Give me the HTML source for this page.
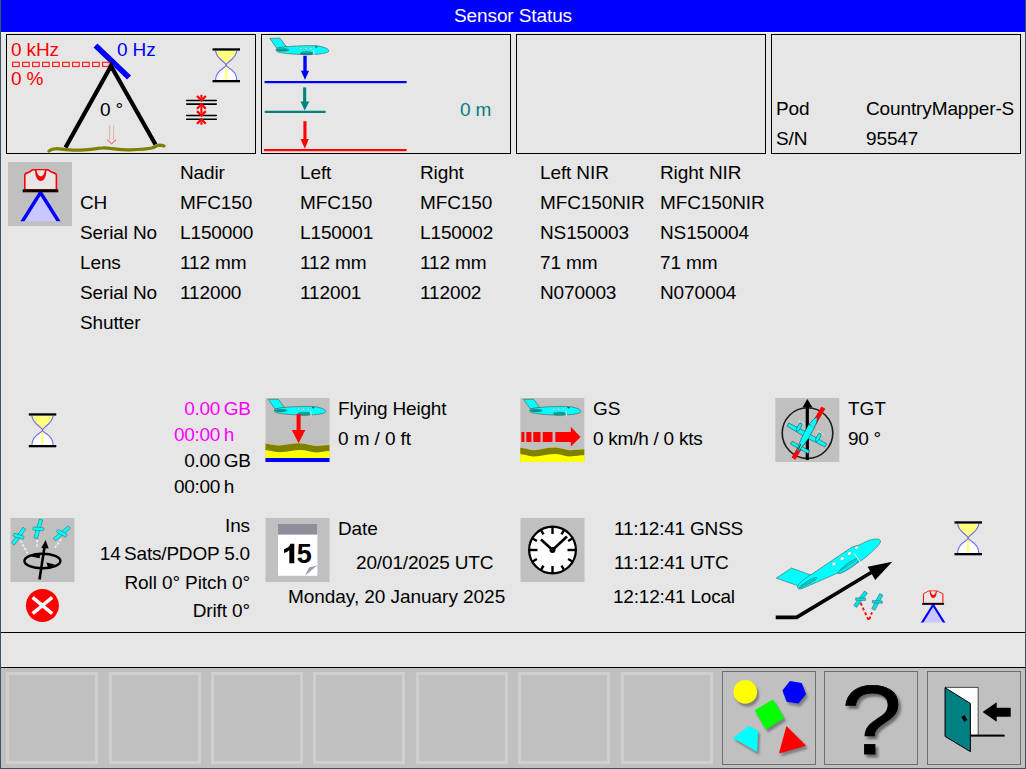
<!DOCTYPE html>
<html><head><meta charset="utf-8">
<style>
html,body{margin:0;padding:0;}
body{width:1026px;height:769px;position:relative;overflow:hidden;background:#e6e6e6;font-family:"Liberation Sans",sans-serif;}
.a{position:absolute;}
.t{position:absolute;font-size:19px;line-height:20px;white-space:pre;color:#000;letter-spacing:-0.12px;}
.r{text-align:right;}
.pnl{position:absolute;top:34px;width:248px;height:118px;border:1px solid #000;}
.btn{position:absolute;top:672px;width:86px;height:86px;border:3px solid #cfcfcf;background:#c0c0c0;}
.ib{position:absolute;top:671px;width:92px;height:92px;border:1px solid #6e6e6e;background:#c0c0c0;}
svg{position:absolute;left:0;top:0;}
</style></head>
<body>
<!-- frame -->
<div class="a" style="left:0;top:0;width:1026px;height:32px;background:#0000ff;"></div>
<div class="a" style="left:1px;top:32px;width:1024px;height:1px;background:#f8f8ee;"></div>
<div class="a" style="left:0;top:0;width:1px;height:769px;background:#3a5266;"></div>
<div class="a" style="left:1025px;top:0;width:1px;height:769px;background:#3a5266;"></div>
<div class="t" style="left:0px;top:5.5px;width:1026px;text-align:center;color:#fff;font-size:19px;letter-spacing:-0.1px;">Sensor Status</div>

<!-- top panels -->
<div class="pnl" style="left:6px;"></div>
<div class="pnl" style="left:261px;"></div>
<div class="pnl" style="left:516px;"></div>
<div class="pnl" style="left:771px;"></div>

<!-- separators / bottom bar -->
<div class="a" style="left:1px;top:632px;width:1024px;height:1px;background:#000;"></div>
<div class="a" style="left:1px;top:667px;width:1024px;height:1px;background:#000;"></div>
<div class="a" style="left:1px;top:668px;width:1024px;height:100px;background:#c0c0c0;"></div>
<div class="a" style="left:0;top:768px;width:1026px;height:1px;background:#3a5266;"></div>

<div class="btn" style="left:6px;"></div>
<div class="btn" style="left:109px;"></div>
<div class="btn" style="left:211px;"></div>
<div class="btn" style="left:313px;"></div>
<div class="btn" style="left:416px;"></div>
<div class="btn" style="left:518px;"></div>
<div class="btn" style="left:621px;"></div>
<div class="ib" style="left:722px;"></div>
<div class="ib" style="left:824px;"></div>
<div class="ib" style="left:927px;"></div>

<!-- panel 1 text -->
<div class="t" style="left:11px;top:40px;color:#ff0000;">0 kHz</div>
<div class="t" style="left:117px;top:40px;color:#0000ff;">0 Hz</div>
<div class="t" style="left:11px;top:69px;color:#ff0000;">0 %</div>
<div class="t" style="left:100px;top:100px;">0 °</div>
<!-- panel 2 text -->
<div class="t" style="left:460px;top:100px;color:#008080;">0 m</div>
<!-- panel 4 text -->
<div class="t" style="left:776px;top:99px;">Pod</div>
<div class="t" style="left:866px;top:99px;">CountryMapper-S</div>
<div class="t" style="left:776px;top:129px;">S/N</div>
<div class="t" style="left:866px;top:129px;">95547</div>

<!-- camera table -->
<div class="t" style="left:180px;top:163px;">Nadir</div>
<div class="t" style="left:300px;top:163px;">Left</div>
<div class="t" style="left:420px;top:163px;">Right</div>
<div class="t" style="left:540px;top:163px;">Left NIR</div>
<div class="t" style="left:660px;top:163px;">Right NIR</div>

<div class="t" style="left:80px;top:193px;">CH</div>
<div class="t" style="left:180px;top:193px;">MFC150</div>
<div class="t" style="left:300px;top:193px;">MFC150</div>
<div class="t" style="left:420px;top:193px;">MFC150</div>
<div class="t" style="left:540px;top:193px;">MFC150NIR</div>
<div class="t" style="left:660px;top:193px;">MFC150NIR</div>

<div class="t" style="left:80px;top:223px;">Serial No</div>
<div class="t" style="left:180px;top:223px;">L150000</div>
<div class="t" style="left:300px;top:223px;">L150001</div>
<div class="t" style="left:420px;top:223px;">L150002</div>
<div class="t" style="left:540px;top:223px;">NS150003</div>
<div class="t" style="left:660px;top:223px;">NS150004</div>

<div class="t" style="left:80px;top:253px;">Lens</div>
<div class="t" style="left:180px;top:253px;">112 mm</div>
<div class="t" style="left:300px;top:253px;">112 mm</div>
<div class="t" style="left:420px;top:253px;">112 mm</div>
<div class="t" style="left:540px;top:253px;">71 mm</div>
<div class="t" style="left:660px;top:253px;">71 mm</div>

<div class="t" style="left:80px;top:283px;">Serial No</div>
<div class="t" style="left:180px;top:283px;">112000</div>
<div class="t" style="left:300px;top:283px;">112001</div>
<div class="t" style="left:420px;top:283px;">112002</div>
<div class="t" style="left:540px;top:283px;">N070003</div>
<div class="t" style="left:660px;top:283px;">N070004</div>

<div class="t" style="left:80px;top:313px;">Shutter</div>

<!-- storage -->
<div class="t r" style="left:150px;top:399px;width:70px;color:#ff00ff;letter-spacing:-0.3px;">0.00</div>
<div class="t" style="left:223.7px;top:399px;color:#ff00ff;">GB</div>
<div class="t r" style="left:150px;top:424.5px;width:70px;color:#ff00ff;letter-spacing:-0.3px;">00:00</div>
<div class="t" style="left:223.7px;top:424.5px;color:#ff00ff;">h</div>
<div class="t r" style="left:150px;top:451px;width:70px;letter-spacing:-0.3px;">0.00</div>
<div class="t" style="left:223.7px;top:451px;">GB</div>
<div class="t r" style="left:150px;top:477px;width:70px;letter-spacing:-0.3px;">00:00</div>
<div class="t" style="left:223.7px;top:477px;">h</div>

<!-- flying height / GS / TGT -->
<div class="t" style="left:338px;top:399px;letter-spacing:-0.2px;">Flying Height</div>
<div class="t" style="left:338px;top:428.5px;letter-spacing:-0.1px;">0 m / 0 ft</div>
<div class="t" style="left:593px;top:399px;">GS</div>
<div class="t" style="left:593px;top:428.5px;letter-spacing:-0.25px;">0 km/h / 0 kts</div>
<div class="t" style="left:848px;top:399px;">TGT</div>
<div class="t" style="left:848px;top:428.5px;letter-spacing:-0.3px;">90 °</div>

<!-- INS -->
<div class="t r" style="left:50px;top:516px;width:200px;">Ins</div>
<div class="t r" style="left:50px;top:544px;width:200px;letter-spacing:-0.2px;">14<span style="margin-left:-1.5px"> </span>Sats/PDOP 5.0</div>
<div class="t r" style="left:50px;top:573px;width:200px;letter-spacing:-0.1px;">Roll 0° Pitch 0°</div>
<div class="t r" style="left:50px;top:601px;width:200px;">Drift 0°</div>

<!-- date -->
<div class="t" style="left:338px;top:519px;">Date</div>
<div class="t" style="left:356px;top:552.5px;letter-spacing:-0.15px;">20/01/2025 UTC</div>
<div class="t" style="left:288px;top:587px;letter-spacing:-0.05px;">Monday, 20 January 2025</div>

<!-- time -->
<div class="t" style="left:614px;top:519px;letter-spacing:-0.2px;">11:12:41 GNSS</div>
<div class="t" style="left:614px;top:553px;letter-spacing:-0.2px;">11:12:41 UTC</div>
<div class="t" style="left:613px;top:587px;letter-spacing:-0.2px;">12:12:41 Local</div>

<!-- ICONS -->
<svg width="1026" height="769" viewBox="0 0 1026 769">
<defs>
 <g id="hg">
  <path d="M3.6,2.8 C3.8,8 8,11 11.5,13.9 C13,15.2 14,16 14.2,17 C14.4,16 15.4,15.2 16.9,13.9 C20.5,11 24.6,8 24.8,2.8 Z" fill="#ffff80"/>
  <path d="M14.2,17.2 C14,18.2 13,19 11,20.3 C7.5,22.5 3.6,25.5 3.6,32 L24.8,32 C24.8,25.5 21,22.5 17.4,20.3 C15.4,19 14.4,18.2 14.2,17.2 Z" fill="#ffffff"/>
  <rect x="12.9" y="16.5" width="2.5" height="15.5" fill="#ffff80"/>
  <path d="M3.6,2.8 C3.8,8 8,11 11.5,13.9 C13,15.2 14,16 14.2,17 C14.4,16 15.4,15.2 16.9,13.9 C20.5,11 24.6,8 24.8,2.8 M14.2,17.2 C14,18.2 13,19 11,20.3 C7.5,22.5 3.6,25.5 3.6,32 M24.8,32 C24.8,25.5 21,22.5 17.4,20.3 C15.4,19 14.4,18.2 14.2,17.2" fill="none" stroke="#6a6af2" stroke-width="1.15"/>
  <rect x="0.5" y="0.3" width="27.5" height="2.3" fill="#000"/>
  <rect x="0.5" y="32" width="27.5" height="2.3" fill="#000"/>
 </g>
 <g id="plane">
  <path d="M0.8,1.4 L11.1,1.2 L17.6,10 L7.7,11.3 Z" fill="#00ffff" stroke="#503030" stroke-width="0.5"/>
  <path d="M7.3,12 C9,9.8 25,8.8 44,8.6 C52,8.6 59.9,11.5 59.9,13.8 C59.9,16.2 50,17.4 40,17.6 C25,17.6 9,16.2 7.3,14 Z" fill="#00ffff" stroke="#503030" stroke-width="0.5"/>
  <ellipse cx="13.8" cy="12.9" rx="6.2" ry="1.2" fill="#00c8c8" stroke="#204040" stroke-width="0.5"/>
  <ellipse cx="37.8" cy="16.2" rx="6.4" ry="1.5" fill="#00d0d0" stroke="#204040" stroke-width="0.5"/>
  <path d="M32.5,16.6 L43,16.2 M10,13.2 L17.5,13" stroke="#0a4a4a" stroke-width="0.6"/>
  <ellipse cx="31.9" cy="11.5" rx="1.3" ry="1" fill="#e8e8e8" stroke="#407070" stroke-width="0.3"/>
  <ellipse cx="37" cy="11.5" rx="1.3" ry="1" fill="#e8e8e8" stroke="#407070" stroke-width="0.3"/>
  <ellipse cx="41.8" cy="11.5" rx="1.3" ry="1" fill="#e8e8e8" stroke="#407070" stroke-width="0.3"/>
  <path d="M45.5,9.2 L48.5,9.6 L47.5,11 Z" fill="#303030"/>
  <line x1="44.5" y1="13" x2="45" y2="19" stroke="#ffffff" stroke-width="0.8"/>
 </g>
 <clipPath id="camclip"><rect x="-5" y="15" width="51" height="37.2"/></clipPath>
 <g id="cam">
  <path d="M1.5,52.2 L20.5,23.2 L39.5,52.2 Z" fill="#c8c8ff"/>
  <path d="M1.45,53.9 L20.5,23.6 L39.55,53.9" fill="none" stroke="#0000ff" stroke-width="3.5" stroke-linejoin="miter" clip-path="url(#camclip)"/>
  <path d="M4.8,20.8 L4.8,6 Q5,4.2 8,3.6 Q10,3 11.6,1.4 Q12.2,0.8 13,0.8 L27.5,0.8 Q28.3,0.8 29,1.4 Q31,3 33,3.6 Q36.2,4.2 36.4,6 L36.4,20.8 Z" fill="#e6e6e6" stroke="#ff0000" stroke-width="1.6"/>
  <path d="M14.9,0.8 C15.3,8 17.3,12 20.75,12 C24.2,12 26.2,8 26.6,0.8 Z" fill="#ff0000"/>
  <path d="M16.6,1.2 C17,4.5 18.5,7.2 20.75,7.2 C23,7.2 24.5,4.5 24.9,1.2 Z" fill="#e6e6e6"/>
  <rect x="2.7" y="20.4" width="35.6" height="2.9" fill="#000"/>
 </g>
</defs>

<!-- panel 1 -->
<g>
 <line x1="95.5" y1="45.5" x2="129" y2="77.5" stroke="#0000ff" stroke-width="5.6"/>
 <g fill="none" stroke="#ff2424" stroke-width="1.2"><rect x="12.6" y="62.3" width="6.6" height="4.2"/><rect x="22.6" y="62.3" width="6.6" height="4.2"/><rect x="32.6" y="62.3" width="6.6" height="4.2"/><rect x="42.6" y="62.3" width="6.6" height="4.2"/><rect x="52.6" y="62.3" width="6.6" height="4.2"/><rect x="62.6" y="62.3" width="6.6" height="4.2"/><rect x="72.6" y="62.3" width="6.6" height="4.2"/><rect x="82.6" y="62.3" width="6.6" height="4.2"/><rect x="92.6" y="62.3" width="6.6" height="4.2"/><rect x="102.6" y="62.3" width="6.6" height="4.2"/></g>
 <path d="M65.5,147.5 L111,66 L155.5,144.5" fill="none" stroke="#000" stroke-width="4.2" stroke-linejoin="miter"/>
 <path d="M48.9,151 C51,149.5 53,148.7 56,148.6 C59,148.4 62,149.3 66,149.6 C72,150 77,150.3 81,150.1 C88,149.8 95,149 100,148.2 C103,147.6 106,147.6 110,148.4 C117,149.6 124,150 130,149.8 C140,149.5 148,149 152,148 C155,147 157,145.3 159,145.2 C161,145.2 163,145.6 164,146" fill="none" stroke="#808000" stroke-width="3.2" stroke-linecap="round"/>
 <path d="M109.6,125 L109.6,140 M113.6,125 L113.6,140" fill="none" stroke="#f08a8a" stroke-width="0.6"/><path d="M107.2,139.8 L111.6,143.8 L116,139.8" fill="none" stroke="#ff2a2a" stroke-width="0.9"/>
 <use href="#hg" transform="translate(212,48)"/>
 <g stroke="#000" stroke-width="1.6" stroke-linecap="round">
  <line x1="186.7" y1="100.5" x2="216.3" y2="100.5"/>
  <line x1="186.7" y1="104.1" x2="216.3" y2="104.1"/>
  <line x1="186.7" y1="115.5" x2="216.3" y2="115.5"/>
  <line x1="186.7" y1="119.2" x2="216.3" y2="119.2"/>
 </g>
 <g fill="#ff0000"><path d="M201.4,102.0 L196.2,96.8 L197.8,95.2 L201.4,98.8 L205.0,95.2 L206.6,96.8 Z"/><path d="M201.4,102.8 L196.2,108.0 L197.8,109.6 L201.4,106.0 L205.0,109.6 L206.6,108.0 Z"/><path d="M201.4,117.1 L196.2,111.9 L197.8,110.3 L201.4,113.9 L205.0,110.3 L206.6,111.9 Z"/><path d="M201.4,117.8 L196.2,123.0 L197.8,124.6 L201.4,121.0 L205.0,124.6 L206.6,123.0 Z"/></g><g stroke="#ff0000" stroke-width="2"><line x1="201.4" y1="94.8" x2="201.4" y2="98.5"/><line x1="201.4" y1="106.5" x2="201.4" y2="113.5"/><line x1="201.4" y1="121.5" x2="201.4" y2="124.8"/></g>
</g>

<!-- panel 2 -->
<g>
 <use href="#plane" transform="translate(269,37)"/>
 <rect x="303.3" y="55.8" width="3.4" height="15.5" fill="#0000ff"/>
 <path d="M300.9,70.8 L309.1,70.8 L305,79.7 Z" fill="#0000ff"/>
 <rect x="264.6" y="81" width="142" height="2.2" fill="#0000ff"/>
 <rect x="303.1" y="87.4" width="3.1" height="14.5" fill="#008080"/>
 <path d="M300.5,101.5 L309.3,101.5 L304.7,110.5 Z" fill="#008080"/>
 <line x1="265.6" y1="111.9" x2="324.7" y2="111.9" stroke="#008080" stroke-width="2.2" stroke-linecap="round"/>
 <rect x="303.4" y="121.2" width="3.1" height="18.2" fill="#ff0000"/>
 <path d="M300.5,139 L308.8,139 L304.9,148.8 Z" fill="#ff0000"/>
 <rect x="263.9" y="149" width="142.7" height="2.2" fill="#ff0000"/>
</g>

<!-- camera icon -->
<rect x="8" y="162" width="64" height="64" fill="#c0c0c0"/>
<use href="#cam" transform="translate(20,169)"/>

<!-- storage hourglass -->
<use href="#hg" transform="translate(28.3,413)"/>

<!-- flying height icon -->
<g>
 <rect x="265.5" y="398" width="64" height="64" fill="#c0c0c0"/>
 <use href="#plane" transform="translate(267.5,398) scale(0.97)"/>
 <rect x="296.6" y="414" width="4" height="16.5" fill="#ff0000"/>
 <path d="M291.8,430 L305.3,430 L298.6,443.2 Z" fill="#ff0000"/>
 <path d="M265.5,443.6 C272,444.5 276,446 280,445.5 C288,444.5 294,443 300,443.2 C306,443.4 312,445.8 316,446 C320,445.8 325,445 329.5,445 L329.5,458.2 L265.5,458.2 Z" fill="#ffff00"/>
 <path d="M265.5,443.6 C272,444.5 276,446 280,445.5 C288,444.5 294,443 300,443.2 C306,443.4 312,445.8 316,446 C320,445.8 325,445 329.5,445 L329.5,451 C325,451 320,452.5 316,452.5 C312,452.2 306,450 300,450 C294,450 288,452 280,452.2 C276,452.2 272,451 265.5,450 Z" fill="#808000"/>
 <rect x="265.5" y="458" width="64" height="4" fill="#0000ff"/>
</g>

<!-- GS icon -->
<g>
 <rect x="520.3" y="398" width="64" height="64" fill="#c0c0c0"/>
 <use href="#plane" transform="translate(522.8,398) scale(0.97)"/>
 <g fill="#ff0000">
  <rect x="521.4" y="432" width="3" height="10"/>
  <rect x="526.3" y="432" width="5.1" height="10"/>
  <rect x="533.3" y="432" width="7.2" height="10"/>
  <rect x="542.7" y="432" width="9.8" height="10"/>
  <rect x="555.3" y="432" width="16" height="10"/>
  <path d="M570.8,426.8 L580.6,437 L570.8,446.4 Z"/>
 </g>
 <path d="M520.3,447.8 C527,448.5 531,450.5 534,450.2 C542,449.5 548,447.3 556,447.5 C562,448 566,450.2 570,450.2 C576,450 580,449.2 584.3,449.2 L584.3,462 L520.3,462 Z" fill="#ffff00"/>
 <path d="M520.3,447.8 C527,448.5 531,450.5 534,450.2 C542,449.5 548,447.3 556,447.5 C562,448 566,450.2 570,450.2 C576,450 580,449.2 584.3,449.2 L584.3,455.3 C580,455.3 576,456 570,456.5 C566,456.5 562,454.5 556,454 C548,454 542,456 534,456.5 C531,456.5 527,455 520.3,454 Z" fill="#808000"/>
</g>

<!-- TGT icon -->
<g>
 <rect x="775.3" y="398" width="64" height="64" fill="#c0c0c0"/>
 <circle cx="807.5" cy="433.1" r="25.3" fill="none" stroke="#1a1a1a" stroke-width="1.6"/>
 <line x1="807.3" y1="406" x2="807.3" y2="460" stroke="#000" stroke-width="3.2"/>
 <path d="M802.6,407.2 L812.4,407.2 L807.3,399 Z" fill="#000"/>
 <line x1="793.5" y1="458.6" x2="823.4" y2="407.6" stroke="#ff0000" stroke-width="4.5"/>
 <g transform="translate(806.9,435) rotate(28.6)" fill="#00ffff" stroke="#1a2a2a" stroke-width="0.45">
  <path d="M-21.6,-1.8 L-3,-2.3 L3,-2.3 L21.6,-1.6 L21.6,1.8 L3,2.5 L-3,2.5 L-21.6,1.7 Z"/>
  <path d="M-10,12.6 L10,12.6 L10,15.8 L-10,15.8 Z"/>
  <path d="M0.3,-20.5 C2,-19.5 3,-14 2.9,-10.3 L-3.2,-10.3 C-2.5,-14 -1.2,-19.5 0.3,-20.5 Z"/>
  <path d="M-3.4,-10.3 L3.1,-10.3 L3.1,0 C2.8,6 1.5,13 0.3,18.3 L-1.3,18.3 C-2.6,13 -3.5,6 -3.4,0 Z"/>
  <ellipse cx="-10.6" cy="-3.2" rx="1.7" ry="4.8"/>
  <ellipse cx="11.1" cy="-3.3" rx="1.7" ry="4.8"/>
  <g stroke="#f4f4f4" stroke-width="0.8" stroke-dasharray="1.5,1.2"><line x1="-14" y1="-8.6" x2="-7" y2="-8.6"/><line x1="7.7" y1="-8.6" x2="14.5" y2="-8.6"/></g>
  <line x1="-1.5" y1="-10.3" x2="2.4" y2="-10.3" stroke="#e0e0e0" stroke-width="0.7"/>
  <line x1="-1" y1="11" x2="-0.5" y2="17" stroke="#102020" stroke-width="0.9"/>
 </g>
</g>

<!-- GNSS icon -->
<g>
 <rect x="10.5" y="518" width="64" height="64" fill="#c0c0c0"/>
 <g stroke="#f2f2f2" stroke-width="1.6" stroke-dasharray="2.6,1.6">
  <line x1="20.6" y1="540.6" x2="27.5" y2="553.4"/>
  <line x1="37.1" y1="540" x2="37.1" y2="548"/>
  <line x1="61.2" y1="539.1" x2="54.9" y2="547.8"/>
 </g>
 <g fill="#00ffff" stroke="#2a5a5a" stroke-width="0.45"><g transform="translate(18.6,536.2)"><rect x="-9.75" y="-1.75" width="19.5" height="3.5" transform="rotate(-54)"/><rect x="-5.5" y="-1.65" width="11" height="3.3" rx="1.2" transform="rotate(17)"/></g><g transform="translate(38.3,528.9)"><rect x="-9.75" y="-1.75" width="19.5" height="3.5" transform="rotate(-74)"/><rect x="-5.5" y="-1.65" width="11" height="3.3" rx="1.2" transform="rotate(3)"/></g><g transform="translate(61.9,533.3)"><rect x="-9.75" y="-1.75" width="19.5" height="3.5" transform="rotate(-40)"/><rect x="-5.5" y="-1.65" width="11" height="3.3" rx="1.2" transform="rotate(29)"/></g></g>
 <ellipse cx="42.4" cy="561" rx="18" ry="7.2" fill="none" stroke="#000" stroke-width="2.4"/>
 <line x1="39.5" y1="579.5" x2="44.8" y2="545" stroke="#000" stroke-width="2.6"/>
 <path d="M45.6,540 L41.3,548 L48.7,548.5 Z" fill="#000"/>
 <path d="M31.2,556.4 L40.5,552.6 L39.6,558.2 Z" fill="#000"/>
 <path d="M55,564.6 L46.4,562.5 L48.2,568.2 Z" fill="#000"/>
</g>
<circle cx="42.4" cy="605.5" r="16.5" fill="#ff0000"/>
<g stroke="#fff" stroke-width="3.4"><line x1="32.6" y1="597.4" x2="52.2" y2="613.6"/><line x1="52.2" y1="597.4" x2="32.6" y2="613.6"/></g>

<!-- calendar icon -->
<g>
 <rect x="265.5" y="518" width="64" height="64" fill="#c0c0c0"/>
 <rect x="278" y="524" width="39.4" height="51.8" fill="#ffffff"/>
 <rect x="278" y="524" width="39.4" height="10.6" fill="#918e9c"/>
 <path d="M289.3,563.2 L294.3,563.2 L294.3,543.8 L290.4,543.8 C289.6,546.6 287.2,548.4 284,549.2 L284,553 C286,552.5 288,551.4 289.3,550.2 Z" fill="#000"/><text x="304.2" y="563.2" text-anchor="middle" font-family="Liberation Sans" font-weight="bold" font-size="27" fill="#000">5</text>
 <path d="M305,575.8 L317.4,565.2 L309,567.5 Z" fill="#a09cb0"/>
</g>

<!-- clock icon -->
<g>
 <rect x="520.5" y="518" width="64" height="64" fill="#c0c0c0"/>
 <circle cx="552.5" cy="550" r="23.4" fill="#fff" stroke="#000" stroke-width="2.2"/>
 <g stroke="#000" stroke-width="2.4" transform="translate(552.5,550)">
  <line x1="0" y1="-23" x2="0" y2="-16"/>
  <line x1="0" y1="23" x2="0" y2="16"/>
  <line x1="-23" y1="0" x2="-15" y2="0"/>
  <line x1="23" y1="0" x2="15" y2="0"/>
  <g transform="rotate(30)"><line x1="0" y1="-23" x2="0" y2="-18"/><line x1="0" y1="23" x2="0" y2="18"/></g>
  <g transform="rotate(60)"><line x1="0" y1="-23" x2="0" y2="-18"/><line x1="0" y1="23" x2="0" y2="18"/></g>
  <g transform="rotate(-30)"><line x1="0" y1="-23" x2="0" y2="-18"/><line x1="0" y1="23" x2="0" y2="18"/></g>
  <g transform="rotate(-60)"><line x1="0" y1="-23" x2="0" y2="-18"/><line x1="0" y1="23" x2="0" y2="18"/></g>
  <line x1="0" y1="0" x2="-11.5" y2="-10.5" stroke-width="2.6"/>
  <line x1="0" y1="0" x2="14.5" y2="-13.5" stroke-width="2.6"/>
 </g>
 <circle cx="552.5" cy="550" r="3" fill="#000"/>
</g>

<!-- takeoff icon -->
<g>
 <path d="M775.7,617.4 L796.6,617.4 L872,572" fill="none" stroke="#000" stroke-width="3.6"/>
 <path d="M892.3,561.7 L867.6,566.7 L875.2,580 Z" fill="#000"/>
 <g fill="#00ffff" stroke="#2a4a4a" stroke-width="0.5">
  <path d="M810.5,575 L791.5,568 L776.3,578.1 L797.9,585.8 Z"/>
  <path d="M797.5,586.5 C799,583 805,578 812,574 L852.4,546.8 L858.7,545.2 C864,542.5 869,539.8 873.5,539.2 C878,538.6 881,539.5 880.5,541.8 C880,544.5 873,551 866,557 C858,563.5 845,570 836,573.8 L803,588.2 C800,589.5 797,589.3 797.5,586.5 Z"/>
  <path d="M838,572.5 C842,567 850,561 856,558.8 C859,558 859.5,560.2 858,562 C854,566.5 846,571 841,573.2 C838.5,574 837.3,573.5 838,572.5 Z" fill="#00e8e8"/>
  <path d="M839.5,570.8 L855.5,560.5" stroke="#2a4a4a" stroke-width="0.4"/>
  <path d="M799.5,587 C804,583 811,578.5 815.5,577.5 C817.5,577.2 817,579 815,580.2 C810,583.5 804,586.3 801,587.5 C799.3,588 798.8,587.8 799.5,587 Z" fill="#00e8e8"/>
  <path d="M801,586.3 L815,578.8" stroke="#2a4a4a" stroke-width="0.4"/>
 </g>
 <g fill="#fff">
  <ellipse cx="834" cy="564" rx="2.1" ry="1.7" stroke="#406060" stroke-width="0.3" transform="rotate(-30 834 564)"/>
  <ellipse cx="842.2" cy="558.5" rx="2.1" ry="1.7" stroke="#406060" stroke-width="0.3" transform="rotate(-30 842.2 558.5)"/>
  <ellipse cx="849.4" cy="553.4" rx="2.1" ry="1.7" stroke="#406060" stroke-width="0.3" transform="rotate(-30 849.4 553.4)"/>
  <ellipse cx="856.5" cy="547.7" rx="2.1" ry="1.4" stroke="#406060" stroke-width="0.3" transform="rotate(-30 856.5 547.7)"/>
 </g>
 <line x1="854.3" y1="553.4" x2="861.9" y2="564.8" stroke="#fff" stroke-width="0.9"/>
 <path d="M860.6,602.9 L868.8,620.6 L872,612.4" fill="none" stroke="#ff0000" stroke-width="1.8" stroke-dasharray="3,2.2"/>
 <g fill="#00e0e8" stroke="#2a6a6a" stroke-width="0.5">
  <g transform="translate(860.6,599.2) rotate(-53)"><rect x="-9" y="-1.8" width="18" height="3.6"/><rect x="-1.2" y="-5" width="2.4" height="10" transform="rotate(-35)"/></g>
  <g transform="translate(877.3,601.9) rotate(-62)"><rect x="-8.5" y="-1.8" width="17" height="3.6"/><rect x="-1.2" y="-5" width="2.4" height="10" transform="rotate(-25)"/></g>
 </g>
</g>
<use href="#hg" transform="translate(954,521)"/>
<use href="#cam" transform="translate(920.5,590.5) scale(0.615)"/>

<!-- shapes button -->
<defs><filter id="sh" x="-30%" y="-30%" width="160%" height="160%"><feGaussianBlur stdDeviation="1.2"/></filter></defs>
<g transform="translate(2,3)" fill="#707070" filter="url(#sh)" opacity="0.8">
 <circle cx="745.3" cy="691.9" r="11.8"/>
 <path d="M806.2,692.3 L800.2,702.7 L788.2,702.7 L782.2,692.3 L788.2,681.9 L800.2,681.9 Z" transform="rotate(9 794.2 692.3)"/>
 <path d="M754.6,710.3 L773,699.4 L784.3,718.1 L765.9,729.4 Z"/>
 <path d="M732.9,737.7 L748.9,725.9 L758.1,730.4 L757.1,752.1 Z"/>
 <path d="M786.4,725.9 L806.3,745.7 L778.9,753.5 Z"/>
</g>
<circle cx="745.3" cy="691.9" r="11.8" fill="#ffff00"/>
<path d="M806.2,692.3 L800.2,702.7 L788.2,702.7 L782.2,692.3 L788.2,681.9 L800.2,681.9 Z" transform="rotate(9 794.2 692.3)" fill="#0000ff"/>
<path d="M754.6,710.3 L773,699.4 L784.3,718.1 L765.9,729.4 Z" fill="#00ff00"/>
<path d="M732.9,737.7 L748.9,725.9 L758.1,730.4 L757.1,752.1 Z" fill="#00ffff"/>
<path d="M786.4,725.9 L806.3,745.7 L778.9,753.5 Z" fill="#ff0000"/>

<!-- help button -->
<g transform="translate(871.5,753.5) scale(1.16,1.045)">
<text x="2.2" y="3" text-anchor="middle" font-family="Liberation Sans" font-size="94" fill="#6a6a6a" stroke="#6a6a6a" stroke-width="0.8" filter="url(#sh)">?</text>
<text x="0" y="0" text-anchor="middle" font-family="Liberation Sans" font-size="94" fill="#000" stroke="#000" stroke-width="0.8">?</text>
</g>

<!-- exit button -->
<g>
 <rect x="945.3" y="687.3" width="32.8" height="48" fill="#fff" stroke="#202020" stroke-width="0.8"/>
 <path d="M945.1,687.7 L970.4,703.4 L970.4,751.7 L945.1,736.4 Z" fill="#008080" stroke="#000" stroke-width="1"/>
 <path d="M961.4,716.9 L964.3,715 L967.3,719.8 L964.4,721.9 Z" fill="#000"/>
 <rect x="970.4" y="734.6" width="34.2" height="2" fill="#000"/>
 <path d="M982.6,712 L996.7,702.2 L996.7,707.7 L1010.7,707.7 L1010.7,716.8 L996.7,716.8 L996.7,721.7 Z" fill="#000"/>
</g>
</svg>
</body></html>
